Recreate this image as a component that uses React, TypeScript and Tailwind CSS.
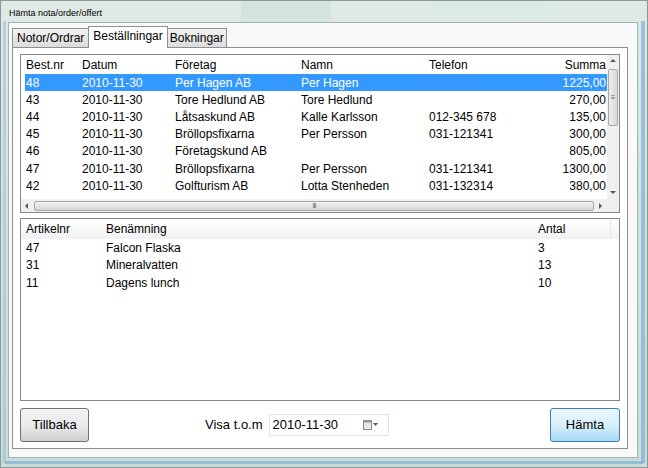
import React from "react";

const rows = [
  ["48", "2010-11-30", "Per Hagen AB", "Per Hagen", "", "1225,00"],
  ["43", "2010-11-30", "Tore Hedlund AB", "Tore Hedlund", "", "270,00"],
  ["44", "2010-11-30", "Låtsaskund AB", "Kalle Karlsson", "012-345 678", "135,00"],
  ["45", "2010-11-30", "Bröllopsfixarna", "Per Persson", "031-121341", "300,00"],
  ["46", "2010-11-30", "Företagskund AB", "", "", "805,00"],
  ["47", "2010-11-30", "Bröllopsfixarna", "Per Persson", "031-121341", "1300,00"],
  ["42", "2010-11-30", "Golfturism AB", "Lotta Stenheden", "031-132314", "380,00"],
];

const items = [
  ["47", "Falcon Flaska", "3"],
  ["31", "Mineralvatten", "13"],
  ["11", "Dagens lunch", "10"],
];

function Arrow({ dir }: { dir: "up" | "down" | "left" | "right" }) {
  const pts =
    dir === "up"
      ? "0,4 3,1 6,4"
      : dir === "down"
      ? "0,1 3,4 6,1"
      : dir === "left"
      ? "4,0 1,3 4,6"
      : "1,0 4,3 1,6";
  return (
    <svg width="6" height="6" viewBox="0 0 6 6">
      <polygon points={pts} fill="#5a5a5a" />
    </svg>
  );
}

export default function App() {
  return (
    <div
      className="w-[648px] h-[468px] relative overflow-hidden flex flex-col bg-gradient-to-b from-[#dfe9e6] via-[#d3e3df] to-[#c9dcd8] border border-[#8a9a99]"
      style={{ fontFamily: '"Liberation Sans", Arial, sans-serif' }}
    >
      {/* glass streaks */}
      <div className="absolute top-0 left-[240px] w-[90px] h-[22px] bg-[#cfe3da] opacity-70" />
      <div className="absolute top-0 left-[430px] w-[120px] h-[22px] bg-[#d9ebe3] opacity-70" />
      <div className="h-[21px] flex items-start pt-[6px] pl-[8px] text-[9px] leading-[12px] text-black relative">
        Hämta nota/order/offert
      </div>
      <div className="flex-1 flex pb-[9px] pl-[7px] pr-[9px]">
        <div className="flex-1 flex flex-col bg-[#f9f9f9] border border-[#9fb3b5] relative">
          {/* Tabs */}
          <div className="flex items-end h-[24px] pl-[3px] text-[12px] text-black relative z-10">
            <div className="h-[19px] px-[4px] flex items-center border border-[#8e8f8f] border-b-0 bg-gradient-to-b from-[#f2f2f2] to-[#dcdcdc] -mr-px">
              Notor/Ordrar
            </div>
            <div className="h-[22px] px-[4px] flex items-center border border-[#8e8f8f] border-b-0 bg-white mb-[-1px] pb-[3px] relative z-10">
              Beställningar
            </div>
            <div className="h-[19px] px-[2px] flex items-center border border-[#8e8f8f] border-b-0 bg-gradient-to-b from-[#f2f2f2] to-[#dcdcdc] -ml-px">
              Bokningar
            </div>
          </div>
          <div className="flex-1 mx-[3px] mr-[9px] mb-[8px] border border-[#8e8f8f] bg-white flex flex-col px-[7px] pt-[6px] text-[12px] text-black">
            {/* Upper list */}
            <div className="h-[159px] border border-[#828790] flex flex-col relative bg-white">
              <div className="flex-1 flex min-h-0">
                <div className="flex-1 flex flex-col overflow-hidden">
                  <div className="h-[19px] flex items-center pl-[5px] shrink-0">
                    <div className="w-[56px]">Best.nr</div>
                    <div className="w-[93px]">Datum</div>
                    <div className="w-[126px]">Företag</div>
                    <div className="w-[128px]">Namn</div>
                    <div className="w-[100px]">Telefon</div>
                    <div className="flex-1 text-right pr-[1px]">Summa</div>
                  </div>
                  {rows.map((r, i) => (
                    <div
                      key={i}
                      className={`h-[17.2px] shrink-0 flex items-center ml-[4px] pl-[1px] ${
                        i === 0 ? "bg-[#3399ff] text-white" : ""
                      }`}
                    >
                      <div className="w-[56px]">{r[0]}</div>
                      <div className="w-[93px]">{r[1]}</div>
                      <div className="w-[126px]">{r[2]}</div>
                      <div className="w-[128px]">{r[3]}</div>
                      <div className="w-[100px]">{r[4]}</div>
                      <div className="flex-1 text-right pr-[1px]">{r[5]}</div>
                    </div>
                  ))}
                </div>
                {/* vertical scrollbar */}
                <div className="w-[12px] bg-[#f0f0f0] flex flex-col items-center">
                  <div className="h-[12px] flex items-center justify-center">
                    <Arrow dir="up" />
                  </div>
                  <div className="h-[57px] w-[10px] mt-[2px] rounded-[2px] border border-[#a7a7a7] bg-gradient-to-r from-[#eeeeee] to-[#d8d8d8] flex items-center justify-center text-[8px] leading-none text-[#666]">
                    ≡
                  </div>
                  <div className="flex-1" />
                  <div className="h-[12px] flex items-center justify-center">
                    <Arrow dir="down" />
                  </div>
                </div>
              </div>
              {/* horizontal scrollbar */}
              <div className="h-[13px] flex bg-[#f0f0f0] shrink-0">
                <div className="flex-1 flex items-center">
                  <div className="w-[12px] flex justify-center">
                    <Arrow dir="left" />
                  </div>
                  <div className="flex-1 h-[10px] mx-[1px] rounded-[2px] border border-[#a7a7a7] bg-gradient-to-b from-[#f2f2f2] to-[#d6d6d6] flex items-center justify-center text-[7px] leading-none text-[#666] tracking-[-1px]">
                    III
                  </div>
                  <div className="w-[12px] flex justify-center">
                    <Arrow dir="right" />
                  </div>
                </div>
                <div className="w-[12px] bg-[#f0f0f0]" />
              </div>
            </div>
            {/* Lower list */}
            <div className="flex-1 mt-[5px] border border-[#828790] bg-white flex flex-col">
              <div className="h-[20px] flex items-center bg-gradient-to-b from-[#ffffff] to-[#f1f2f4] border-b border-[#eef0f3] shrink-0">
                <div className="w-[590px] flex items-center pl-[5px] border-r border-[#e3e5e8] h-full">
                  <div className="w-[80px]">Artikelnr</div>
                  <div className="w-[432px]">Benämning</div>
                  <div>Antal</div>
                </div>
              </div>
              {items.map((r, i) => (
                <div key={i} className="h-[17.5px] flex items-center pl-[5px]">
                  <div className="w-[80px]">{r[0]}</div>
                  <div className="w-[432px]">{r[1]}</div>
                  <div>{r[2]}</div>
                </div>
              ))}
            </div>
            {/* Bottom bar */}
            <div className="h-[47px] flex items-center shrink-0">
              <button className="w-[69px] h-[34px] rounded-[3px] border border-[#707070] bg-gradient-to-b from-[#f2f2f2] via-[#ebebeb] to-[#cfcfcf] text-[13px] text-black">
                Tillbaka
              </button>
              <div className="ml-[116px] text-[13px]">Visa t.o.m</div>
              <div className="ml-[6px] w-[120px] h-[22px] border border-[#e2e3ea] bg-white flex items-center pl-[3px] text-[13px]">
                <span className="flex-1">2010-11-30</span>
                <div className="flex items-center gap-[1px] pr-[10px]">
                  <svg width="9" height="10" viewBox="0 0 9 10">
                    <rect x="0.5" y="0.5" width="8" height="9" fill="#e8e8e8" stroke="#8a8a8a" />
                    <rect x="0.5" y="0.5" width="8" height="2" fill="#9a9a9a" />
                  </svg>
                  <svg width="5" height="4" viewBox="0 0 5 4">
                    <polygon points="0,0 5,0 2.5,3" fill="#555" />
                  </svg>
                </div>
              </div>
              <div className="flex-1" />
              <button className="w-[70px] h-[34px] rounded-[3px] border border-[#3c7fb1] bg-gradient-to-b from-[#eaf6fd] via-[#d9f0fc] to-[#a7d9f5] text-[13px] text-black">
                Hämta
              </button>
            </div>
          </div>
        </div>
      </div>
      {/* frame blue accent lines */}
      <div className="absolute right-[2px] top-[20px] bottom-[4px] w-[4px] bg-[#6fa6d4] opacity-60" />
      <div className="absolute left-[2px] top-[20px] bottom-[4px] w-[3px] bg-[#9cc0dc] opacity-60" />
      <div className="absolute left-[4px] right-[4px] bottom-[3px] h-[3px] bg-[#6fa6d4] opacity-60" />
    </div>
  );
}
